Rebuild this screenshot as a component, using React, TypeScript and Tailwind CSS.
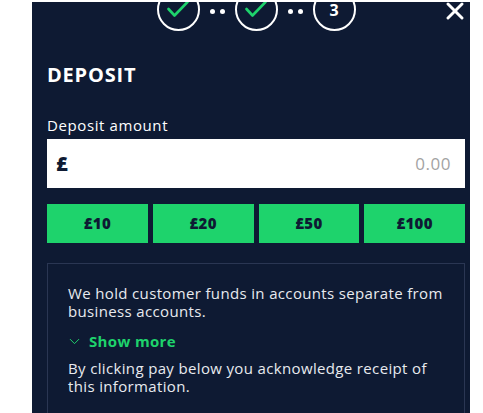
import { X, ChevronDown } from "lucide-react";

const AMOUNTS = ["£10", "£20", "£50", "£100"];

function StepCircle({ children }: { children: React.ReactNode }) {
  return (
    <div className="w-[43px] h-[43px] rounded-full border-2 border-white flex items-center justify-center shrink-0">
      {children}
    </div>
  );
}

function Check() {
  return (
    <svg width="43" height="43" viewBox="0 0 43 43" className="-m-[2px]">
      <polyline
        points="11.5,21 17.5,27.5 30.5,14"
        fill="none"
        stroke="#1ed36c"
        strokeWidth="2.6"
        strokeLinecap="round"
        strokeLinejoin="round"
      />
    </svg>
  );
}

function Dots() {
  return (
    <div className="flex gap-[5px] mx-[10px] pt-[3px]">
      <span className="w-[5px] h-[5px] rounded-full bg-white" />
      <span className="w-[5px] h-[5px] rounded-full bg-white" />
    </div>
  );
}

export default function App() {
  return (
    <div className="w-[483px] h-[413px] bg-white overflow-hidden font-['Open_Sans',sans-serif]">
      <div className="ml-[32px] mt-[2px] w-[438px] h-[411px] bg-[#0e1a33] overflow-hidden pl-[15px] pr-[5px] text-white">
        {/* Stepper */}
        <div className="relative -mt-[14px] h-[43px] flex items-center justify-center">
          <StepCircle>
            <Check />
          </StepCircle>
          <Dots />
          <StepCircle>
            <Check />
          </StepCircle>
          <Dots />
          <StepCircle>
            <span className="text-[16px] font-bold leading-none mt-[1px]">3</span>
          </StepCircle>
          <X className="absolute right-[-4px] top-[9px] w-[28px] h-[28px]" strokeWidth={2.5} />
        </div>

        <h1 className="mt-[32px] text-[20px] leading-[24px] font-bold tracking-[0.8px]">DEPOSIT</h1>

        <label className="block mt-[28px] text-[15px] leading-[20px] tracking-[0.6px]">
          Deposit amount
        </label>

        {/* Amount input */}
        <div className="mt-[4px] h-[49px] bg-white flex items-center justify-between pl-[9px] pr-[14px]">
          <span className="text-[#0e1a33] text-[20px] font-extrabold">£</span>
          <span className="text-[#a3a3a3] text-[17px] tracking-[0.5px]">0.00</span>
        </div>

        {/* Quick amounts */}
        <div className="mt-[16px] grid grid-cols-4 gap-[5px]">
          {AMOUNTS.map((a) => (
            <button
              key={a}
              className="h-[39px] bg-[#1ed36c] text-[#0e1a33] text-[15px] font-extrabold tracking-[0.3px]"
            >
              {a}
            </button>
          ))}
        </div>

        {/* Info box */}
        <div className="mt-[20px] border border-[#2a3653] px-[20px] pt-[20px] pb-[20px] text-[15px] leading-[18px] tracking-[0.35px] text-[#e8eaef]">
          <p>
            We hold customer funds in accounts separate from
            <br />
            business accounts.
          </p>
          <div className="mt-[12px] flex items-center gap-[6px] text-[#1ed36c] font-bold">
            <ChevronDown className="w-[17px] h-[17px] -ml-[2px]" strokeWidth={1.4} />
            <span>Show more</span>
          </div>
          <p className="mt-[9px]">
            By clicking pay below you acknowledge receipt of
            <br />
            this information.
          </p>
        </div>
      </div>
    </div>
  );
}
